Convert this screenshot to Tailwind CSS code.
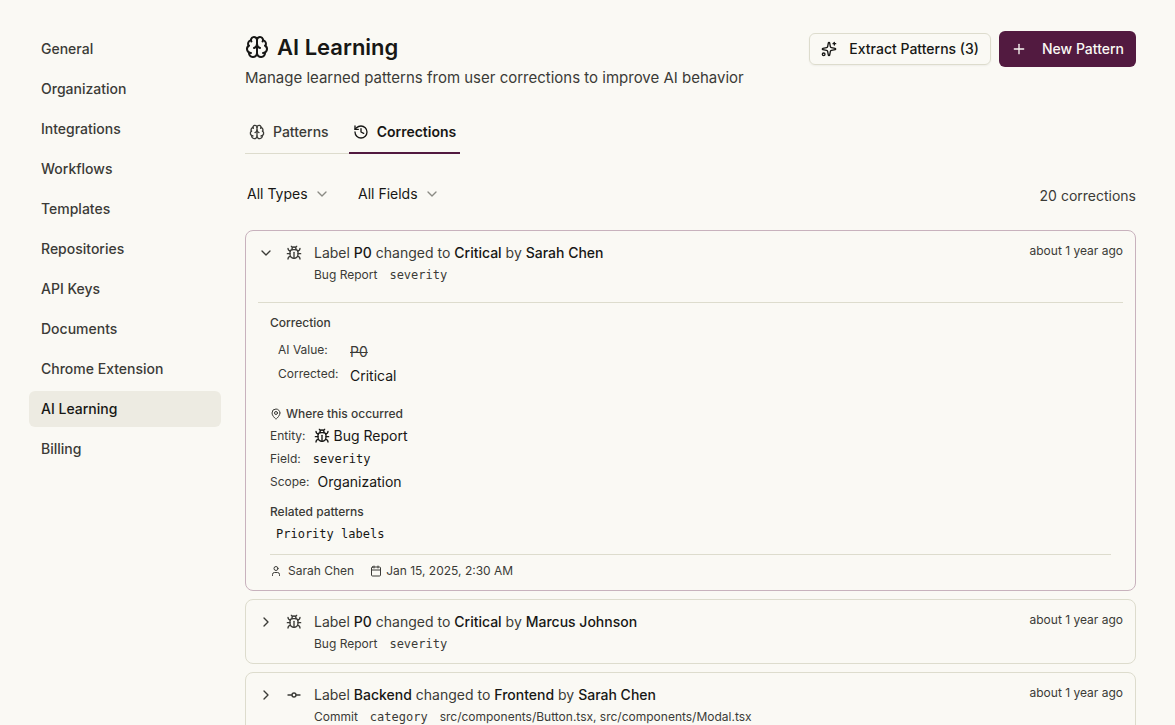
<!DOCTYPE html>
<html lang="en">
<head>
  <meta charset="UTF-8">
  <meta name="viewport" content="width=device-width, initial-scale=1.0">
  <title>AI Learning</title>
  <script src="https://cdn.jsdelivr.net/npm/@tailwindcss/browser@4"></script>
</head>
<body class="bg-[#faf9f4] text-[#3b3b37] font-['Inter',sans-serif] text-sm h-screen overflow-hidden">

  <!-- Icons -->
  <svg class="hidden">
    <symbol id="brain" viewBox="0 0 24 24">
      <path d="M12 18V5"/><path d="M15 13a4.17 4.17 0 0 1-3-4 4.17 4.17 0 0 1-3 4"/><path d="M17.598 6.5A3 3 0 1 0 12 5a3 3 0 1 0-5.598 1.5"/><path d="M17.997 5.125a4 4 0 0 1 2.526 5.77"/><path d="M18 18a4 4 0 0 0 2-7.464"/><path d="M19.967 17.483A4 4 0 1 1 12 18a4 4 0 1 1-7.967-.517"/><path d="M6 18a4 4 0 0 1-2-7.464"/><path d="M6.003 5.125a4 4 0 0 0-2.526 5.77"/>
    </symbol>
    <symbol id="bug" viewBox="0 0 24 24">
      <path d="M12 20v-9"/><path d="M14 7a4 4 0 0 1 4 4v3a6 6 0 0 1-12 0v-3a4 4 0 0 1 4-4z"/><path d="M14.12 3.88 16 2"/><path d="M21 21a4 4 0 0 0-3.81-4"/><path d="M21 5a4 4 0 0 1-3.55 3.97"/><path d="M22 13h-4"/><path d="M3 21a4 4 0 0 1 3.81-4"/><path d="M3 5a4 4 0 0 0 3.55 3.97"/><path d="M6 13H2"/><path d="m8 2 1.88 1.88"/><path d="M9 7.13V6a3 3 0 1 1 6 0v1.13"/>
    </symbol>
    <symbol id="sparkles" viewBox="0 0 24 24">
      <path d="M11.017 2.814a1 1 0 0 1 1.966 0l1.051 5.558a2 2 0 0 0 1.594 1.594l5.558 1.051a1 1 0 0 1 0 1.966l-5.558 1.051a2 2 0 0 0-1.594 1.594l-1.051 5.558a1 1 0 0 1-1.966 0l-1.051-5.558a2 2 0 0 0-1.594-1.594l-5.558-1.051a1 1 0 0 1 0-1.966l5.558-1.051a2 2 0 0 0 1.594-1.594z"/><path d="M20 2v4"/><path d="M22 4h-4"/><circle cx="4" cy="20" r="2"/>
    </symbol>
    <symbol id="history" viewBox="0 0 24 24">
      <path d="M3 12a9 9 0 1 0 9-9 9.75 9.75 0 0 0-6.74 2.74L3 8"/><path d="M3 3v5h5"/><path d="M12 7v5l4 2"/>
    </symbol>
    <symbol id="commit" viewBox="0 0 24 24">
      <circle cx="12" cy="12" r="3"/><path d="M3 12h6"/><path d="M15 12h6"/>
    </symbol>
    <symbol id="pin" viewBox="0 0 24 24">
      <path d="M20 10c0 4.993-5.539 10.193-7.399 11.799a1 1 0 0 1-1.202 0C9.539 20.193 4 14.993 4 10a8 8 0 0 1 16 0"/><circle cx="12" cy="10" r="3"/>
    </symbol>
    <symbol id="user" viewBox="0 0 24 24">
      <path d="M19 21v-2a4 4 0 0 0-4-4H9a4 4 0 0 0-4 4v2"/><circle cx="12" cy="7" r="4"/>
    </symbol>
    <symbol id="calendar" viewBox="0 0 24 24">
      <path d="M8 2v4"/><path d="M16 2v4"/><rect width="18" height="18" x="3" y="4" rx="2"/><path d="M3 10h18"/>
    </symbol>
    <symbol id="plus" viewBox="0 0 24 24"><path d="M5 12h14"/><path d="M12 5v14"/></symbol>
    <symbol id="down" viewBox="0 0 24 24"><path d="m6 9 6 6 6-6"/></symbol>
    <symbol id="right" viewBox="0 0 24 24"><path d="m9 18 6-6-6-6"/></symbol>
  </svg>

  <div class="flex gap-6 pt-[31px] pl-[29px] pr-[39px]">
    <!-- Sidebar -->
    <nav class="w-48 shrink-0 flex flex-col gap-1 font-medium">
      <a href="#" class="h-9 px-3 flex items-center rounded-md">General</a>
      <a href="#" class="h-9 px-3 flex items-center rounded-md">Organization</a>
      <a href="#" class="h-9 px-3 flex items-center rounded-md">Integrations</a>
      <a href="#" class="h-9 px-3 flex items-center rounded-md">Workflows</a>
      <a href="#" class="h-9 px-3 flex items-center rounded-md">Templates</a>
      <a href="#" class="h-9 px-3 flex items-center rounded-md">Repositories</a>
      <a href="#" class="h-9 px-3 flex items-center rounded-md">API Keys</a>
      <a href="#" class="h-9 px-3 flex items-center rounded-md">Documents</a>
      <a href="#" class="h-9 px-3 flex items-center rounded-md">Chrome Extension</a>
      <a href="#" aria-current="page" class="h-9 px-3 flex items-center rounded-md bg-[#edebe2] text-[#171715]">AI Learning</a>
      <a href="#" class="h-9 px-3 flex items-center rounded-md">Billing</a>
    </nav>

    <main class="flex-1 min-w-0">
      <!-- Header -->
      <header class="flex justify-between items-start">
        <div>
          <h1 class="flex items-center gap-2 text-[22px]/8 font-semibold text-[#171715]">
            <svg class="size-6 fill-none stroke-current stroke-2" stroke-linecap="round" stroke-linejoin="round"><use href="#brain"/></svg>
            AI Learning
          </h1>
          <p class="mt-[3px] text-[15px]/6">Manage learned patterns from user corrections to improve AI behavior</p>
        </div>
        <div class="flex items-center gap-2 font-medium">
          <button class="h-8 px-[11px] flex items-center gap-3 rounded-md border border-[#dddccd] text-[#171715] shadow-xs">
            <svg class="size-4 fill-none stroke-current stroke-2" stroke-linecap="round" stroke-linejoin="round"><use href="#sparkles"/></svg>
            Extract Patterns (3)
          </button>
          <button class="h-9 px-3 flex items-center gap-[15px] rounded-md bg-[#521a40] text-[#faf9f4]">
            <svg class="size-4 fill-none stroke-current stroke-2" stroke-linecap="round" stroke-linejoin="round"><use href="#plus"/></svg>
            New Pattern
          </button>
        </div>
      </header>

      <!-- Tabs -->
      <div class="mt-5 flex w-fit font-medium" role="tablist">
        <button role="tab" aria-selected="false" class="h-11 pl-1 pr-5 flex items-center gap-2 border-b border-[#dddccd]">
          <svg class="size-4 fill-none stroke-current stroke-2" stroke-linecap="round" stroke-linejoin="round"><use href="#brain"/></svg>
          Patterns
        </button>
        <button role="tab" aria-selected="true" class="h-11 px-1 pt-px flex items-center gap-2 border-b-2 border-[#521a40] font-semibold text-[#171715]">
          <svg class="size-4 fill-none stroke-current stroke-2" stroke-linecap="round" stroke-linejoin="round"><use href="#history"/></svg>
          Corrections
        </button>
      </div>

      <!-- Filters -->
      <div class="mt-[26px] h-8 flex items-center justify-between">
        <div class="flex gap-7 pl-[2px] pb-1 text-[#171715]">
          <div class="relative">
            <select aria-label="Type" class="appearance-none w-[83px] h-7">
              <option>All Types</option>
            </select>
            <svg class="absolute right-0 top-[6px] size-4 fill-none stroke-[#8b8b84] stroke-2 pointer-events-none" stroke-linecap="round" stroke-linejoin="round"><use href="#down"/></svg>
          </div>
          <div class="relative">
            <select aria-label="Field" class="appearance-none w-[82px] h-7">
              <option>All Fields</option>
            </select>
            <svg class="absolute right-0 top-[6px] size-4 fill-none stroke-[#8b8b84] stroke-2 pointer-events-none" stroke-linecap="round" stroke-linejoin="round"><use href="#down"/></svg>
          </div>
        </div>
        <span>20 corrections</span>
      </div>

      <!-- Corrections list -->
      <div class="mt-[18px] flex flex-col gap-2">
        <article class="rounded-lg border border-[#c8b2bd] px-3">
          <div class="flex gap-3 pt-3 pb-[11px]">
            <button aria-label="Collapse" aria-expanded="true" class="size-4 mt-[2px] shrink-0">
              <svg class="size-4 fill-none stroke-current stroke-2" stroke-linecap="round" stroke-linejoin="round"><use href="#down"/></svg>
            </button>
            <svg class="size-4 mt-[2px] shrink-0 fill-none stroke-current stroke-2" stroke-linecap="round" stroke-linejoin="round"><use href="#bug"/></svg>
            <div class="flex-1">
              <p>Label <b class="font-medium text-[#171715]">P0</b> changed to <b class="font-medium text-[#171715]">Critical</b> by <b class="font-medium text-[#171715]">Sarah Chen</b></p>
              <div class="mt-1 flex gap-3 text-xs"><span>Bug Report</span><span class="font-['DejaVu_Sans_Mono',monospace]">severity</span></div>
            </div>
            <time class="text-xs">about 1 year ago</time>
          </div>

          <div class="mt-2 border-t border-[#dddccd] px-3 pt-3 pb-[11px] text-xs">
            <h2 class="font-medium">Correction</h2>
            <dl class="mt-[9px] px-2 grid grid-cols-[60px_1fr] gap-x-3 gap-y-1">
              <dt class="pt-[2px]">AI Value:</dt>
              <dd class="pt-[2px] text-sm/5 line-through">P0</dd>
              <dt>Corrected:</dt>
              <dd class="text-sm/5 text-[#171715]">Critical</dd>
            </dl>

            <h2 class="mt-5 flex items-center gap-1 font-medium">
              <svg class="size-3 fill-none stroke-current stroke-2" stroke-linecap="round" stroke-linejoin="round"><use href="#pin"/></svg>
              Where this occurred
            </h2>
            <dl class="mt-1 flex flex-col gap-[3px]">
              <div class="flex items-center gap-2">
                <dt>Entity:</dt>
                <dd class="flex items-center gap-1 text-sm/5 text-[#171715]">
                  <svg class="size-4 fill-none stroke-current stroke-2" stroke-linecap="round" stroke-linejoin="round"><use href="#bug"/></svg>
                  Bug Report
                </dd>
              </div>
              <div class="flex items-center gap-3">
                <dt>Field:</dt>
                <dd class="font-['DejaVu_Sans_Mono',monospace] text-xs/5 text-[#171715]">severity</dd>
              </div>
              <div class="flex items-center gap-2">
                <dt>Scope:</dt>
                <dd class="text-sm/5 text-[#171715]">Organization</dd>
              </div>
            </dl>

            <h2 class="mt-3 font-medium">Related patterns</h2>
            <p class="mt-[6px] px-[6px] font-['DejaVu_Sans_Mono',monospace] text-[#171715]">Priority labels</p>

            <footer class="mt-3 border-t border-[#dddccd] pt-2 flex gap-4">
              <span class="flex items-center gap-[6px]">
                <svg class="size-3 fill-none stroke-current stroke-2" stroke-linecap="round" stroke-linejoin="round"><use href="#user"/></svg>
                Sarah Chen
              </span>
              <span class="flex items-center gap-1">
                <svg class="size-3 fill-none stroke-current stroke-2" stroke-linecap="round" stroke-linejoin="round"><use href="#calendar"/></svg>
                Jan 15, 2025, 2:30 AM
              </span>
            </footer>
          </div>
        </article>

        <article class="rounded-lg border border-[#dddccd] px-3">
          <div class="flex gap-3 pt-3 pb-[11px]">
            <button aria-label="Expand" aria-expanded="false" class="size-4 mt-[2px] shrink-0">
              <svg class="size-4 fill-none stroke-current stroke-2" stroke-linecap="round" stroke-linejoin="round"><use href="#right"/></svg>
            </button>
            <svg class="size-4 mt-[2px] shrink-0 fill-none stroke-current stroke-2" stroke-linecap="round" stroke-linejoin="round"><use href="#bug"/></svg>
            <div class="flex-1">
              <p>Label <b class="font-medium text-[#171715]">P0</b> changed to <b class="font-medium text-[#171715]">Critical</b> by <b class="font-medium text-[#171715]">Marcus Johnson</b></p>
              <div class="mt-1 flex gap-3 text-xs"><span>Bug Report</span><span class="font-['DejaVu_Sans_Mono',monospace]">severity</span></div>
            </div>
            <time class="text-xs">about 1 year ago</time>
          </div>
        </article>

        <article class="rounded-lg border border-[#dddccd] px-3">
          <div class="flex gap-3 pt-3 pb-[11px]">
            <button aria-label="Expand" aria-expanded="false" class="size-4 mt-[2px] shrink-0">
              <svg class="size-4 fill-none stroke-current stroke-2" stroke-linecap="round" stroke-linejoin="round"><use href="#right"/></svg>
            </button>
            <svg class="size-4 mt-[2px] shrink-0 fill-none stroke-current stroke-2" stroke-linecap="round" stroke-linejoin="round"><use href="#commit"/></svg>
            <div class="flex-1">
              <p>Label <b class="font-medium text-[#171715]">Backend</b> changed to <b class="font-medium text-[#171715]">Frontend</b> by <b class="font-medium text-[#171715]">Sarah Chen</b></p>
              <div class="mt-1 flex gap-3 text-xs"><span>Commit</span><span class="font-['DejaVu_Sans_Mono',monospace]">category</span><span>src/components/Button.tsx, src/components/Modal.tsx</span></div>
            </div>
            <time class="text-xs">about 1 year ago</time>
          </div>
        </article>
      </div>
    </main>
  </div>
</body>
</html>
